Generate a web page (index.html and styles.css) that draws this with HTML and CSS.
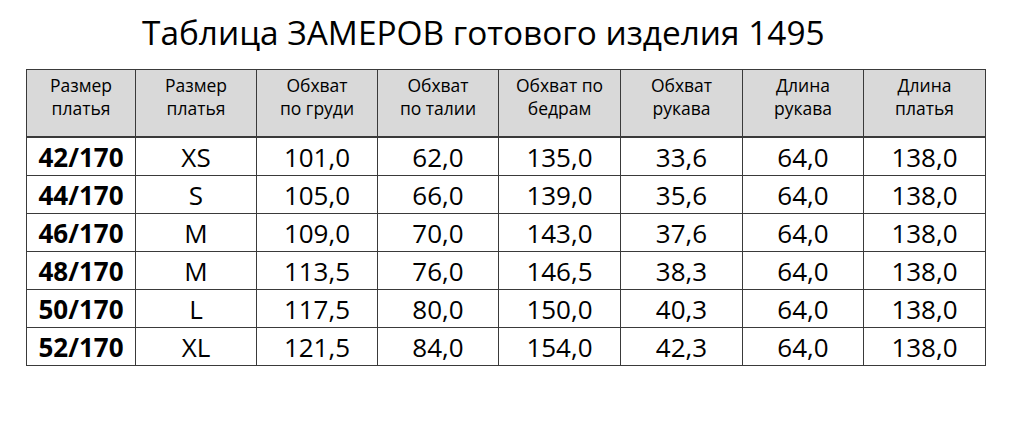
FILE: index.html
```html
<!DOCTYPE html>
<html lang="ru">
<head>
<meta charset="utf-8">
<title>Таблица ЗАМЕРОВ</title>
<link rel="stylesheet" href="styles.css">
</head>
<body>
<div class="page">
  <h1 class="title">Таблица ЗАМЕРОВ готового изделия 1495</h1>
  <table class="sizes">
    <colgroup>
      <col class="c1"><col class="c2"><col class="c3"><col class="c3"><col class="c4"><col class="c4"><col class="c3"><col class="c4">
    </colgroup>
    <thead>
      <tr>
        <th>Размер<br>платья</th>
        <th>Размер<br>платья</th>
        <th>Обхват<br>по груди</th>
        <th>Обхват<br>по талии</th>
        <th>Обхват по<br>бедрам</th>
        <th>Обхват<br>рукава</th>
        <th>Длина<br>рукава</th>
        <th>Длина<br>платья</th>
      </tr>
    </thead>
    <tbody>
      <tr><td class="sz">42/170</td><td>XS</td><td>101,0</td><td>62,0</td><td>135,0</td><td>33,6</td><td>64,0</td><td>138,0</td></tr>
      <tr><td class="sz">44/170</td><td>S</td><td>105,0</td><td>66,0</td><td>139,0</td><td>35,6</td><td>64,0</td><td>138,0</td></tr>
      <tr><td class="sz">46/170</td><td>M</td><td>109,0</td><td>70,0</td><td>143,0</td><td>37,6</td><td>64,0</td><td>138,0</td></tr>
      <tr><td class="sz">48/170</td><td>M</td><td>113,5</td><td>76,0</td><td>146,5</td><td>38,3</td><td>64,0</td><td>138,0</td></tr>
      <tr><td class="sz">50/170</td><td>L</td><td>117,5</td><td>80,0</td><td>150,0</td><td>40,3</td><td>64,0</td><td>138,0</td></tr>
      <tr><td class="sz">52/170</td><td>XL</td><td>121,5</td><td>84,0</td><td>154,0</td><td>42,3</td><td>64,0</td><td>138,0</td></tr>
    </tbody>
  </table>
</div>
</body>
</html>
```
FILE: styles.css
```css
html, body {
  margin: 0;
  padding: 0;
  background: #ffffff;
}
body {
  font-family: "Open Sans", "Liberation Sans", sans-serif;
  color: #000;
}
.page {
  width: 1024px;
  height: 448px;
  padding: 12px 0 0 26px;
  box-sizing: border-box;
}
.title {
  margin: 0 0 17px 116px;
  font-size: 33.4px;
  font-weight: 400;
  line-height: 40px;
  height: 40px;
  white-space: nowrap;
}
.sizes {
  border-collapse: collapse;
  table-layout: fixed;
  width: 960px;
}
.c1 { width: 109px; }
.c2 { width: 121px; }
.c3 { width: 121px; }
.c4 { width: 122px; }
.sizes th,
.sizes td {
  border: 1.5px solid #3a3a3a;
  text-align: center;
  padding: 0;
}
.sizes th {
  background: #d9d9d9;
  font-weight: 400;
  font-size: 17.5px;
  line-height: 23px;
  height: 67px;
  box-sizing: border-box;
  vertical-align: top;
  padding-top: 4px;
  border-bottom-width: 2.5px;
}
.sizes td {
  font-size: 26px;
  line-height: 36px;
  height: 38px;
  box-sizing: border-box;
  vertical-align: middle;
  padding-top: 1px;
}
.sizes td.sz {
  font-weight: 700;
}
```
